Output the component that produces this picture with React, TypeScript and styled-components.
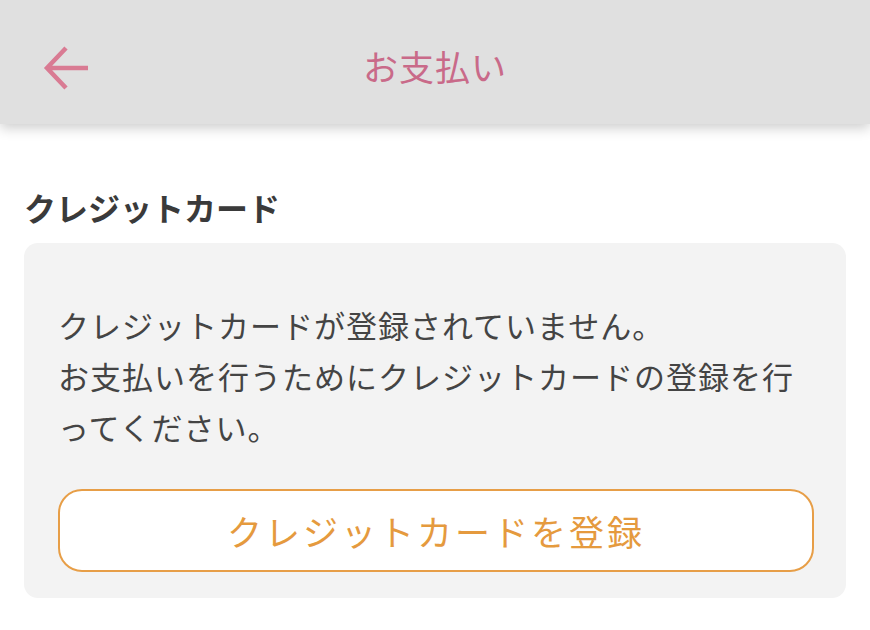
import React from "react";
import styled, { createGlobalStyle } from "styled-components";

const GlobalStyle = createGlobalStyle`
  body {
    margin: 0;
    background: #ffffff;
    font-family: "Noto Sans CJK JP", "Noto Sans", sans-serif;
  }
`;

const Header = styled.header`
  position: relative;
  height: 124px;
  background: #e0e0e0;
  display: flex;
  align-items: center;
  justify-content: center;
  box-shadow: 0 4px 12px rgba(0, 0, 0, 0.2);
`;

const BackButton = styled.button`
  position: absolute;
  left: 38px;
  top: 40px;
  width: 56px;
  height: 56px;
  padding: 0;
  border: none;
  background: transparent;
  display: flex;
  align-items: center;
  justify-content: center;
`;

const Title = styled.h1`
  margin: 0;
  font-size: 35px;
  font-weight: 400;
  color: #c96a89;
  letter-spacing: 1px;
  padding-top: 6px;
`;

const Main = styled.main`
  padding: 61px 24px 0;
`;

const SectionTitle = styled.h2`
  margin: 0 0 14px 0;
  font-size: 32px;
  font-weight: 700;
  color: #3a3a3a;
  line-height: 44px;
`;

const Card = styled.section`
  background: #f3f3f3;
  border-radius: 14px;
  padding: 56px 32px 26px 34px;
`;

const Message = styled.p`
  margin: 0;
  font-size: 31px;
  line-height: 51px;
  color: #444444;
  letter-spacing: 1px;
`;

const RegisterButton = styled.button`
  margin-top: 37px;
  width: 100%;
  height: 83px;
  border: 2px solid #e79e47;
  border-radius: 24px;
  background: #ffffff;
  color: #e59a3e;
  font-family: inherit;
  font-size: 35px;
  letter-spacing: 3px;
  display: flex;
  align-items: center;
  justify-content: center;
`;

const BackArrow = () => (
  <svg width="50" height="50" viewBox="0 0 50 50" fill="none">
    <path
      d="M47 25H6M25 5L6 25l19 20"
      stroke="#d97b93"
      strokeWidth="4.5"
      strokeLinecap="butt"
    />
  </svg>
);

export default function App() {
  return (
    <>
      <GlobalStyle />
      <Header>
        <BackButton aria-label="戻る">
          <BackArrow />
        </BackButton>
        <Title>お支払い</Title>
      </Header>
      <Main>
        <SectionTitle>クレジットカード</SectionTitle>
        <Card>
          <Message>
            クレジットカードが登録されていません。
            <br />
            お支払いを行うためにクレジットカードの登録を行ってください。
          </Message>
          <RegisterButton>クレジットカードを登録</RegisterButton>
        </Card>
      </Main>
    </>
  );
}
